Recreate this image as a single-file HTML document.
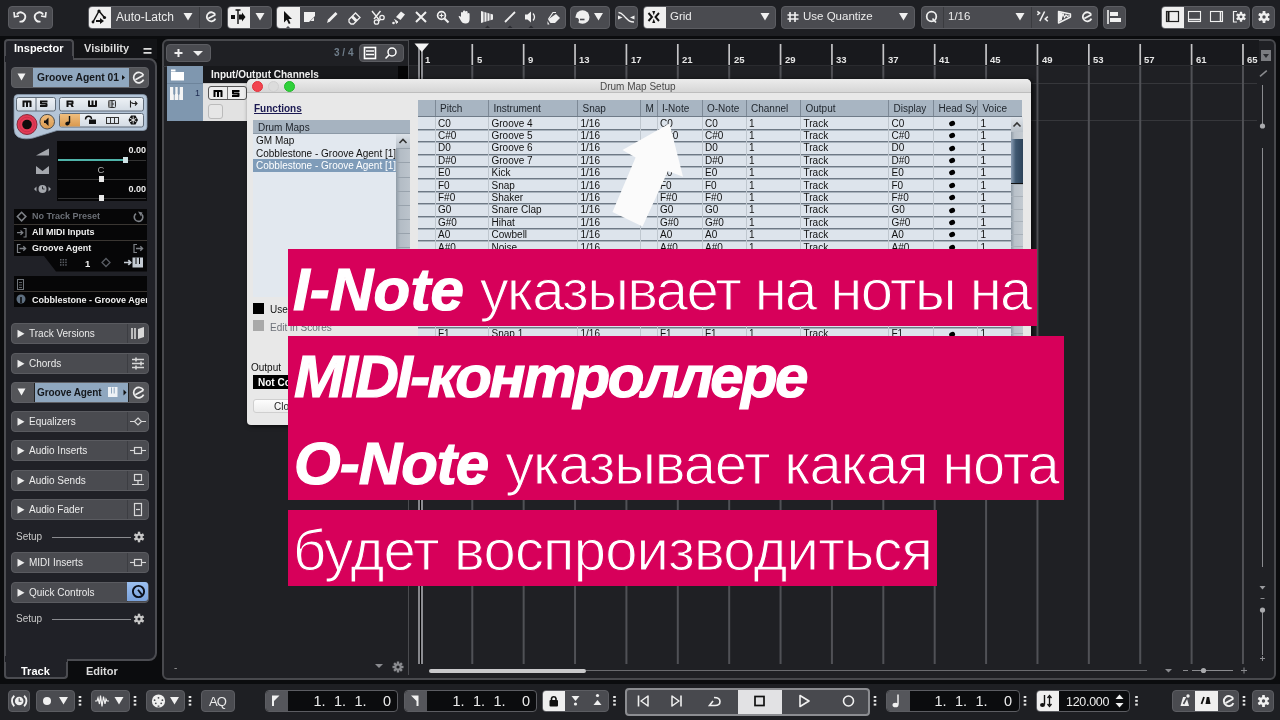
<!DOCTYPE html>
<html><head><meta charset="utf-8">
<style>
*{margin:0;padding:0;box-sizing:border-box}
html,body{width:1280px;height:720px;overflow:hidden;will-change:transform;background:#0b0c0e;font-family:"Liberation Sans",sans-serif;color:#fff}
.a{position:absolute}
.btn{position:absolute;background:#4a4b50;border:1px solid #5c5d62;border-radius:4px}
.wb{position:absolute;background:#efefef}
.dv{position:absolute;top:0;bottom:0;width:1px;background:#35363a}
.tri{position:absolute;width:0;height:0;border-left:5px solid transparent;border-right:5px solid transparent;border-top:8px solid #eee}
.t{position:absolute;white-space:nowrap}
</style></head><body>

<!-- TOP TOOLBAR -->
<div class="a" style="left:0;top:0;width:1280px;height:36px;background:#1e1f23"></div>
<div id="toolbar">
<div class="btn" style="left:8px;top:6px;width:45px;height:23px;overflow:hidden"></div>
<div class="btn" style="left:88px;top:6px;width:134px;height:23px;overflow:hidden"><div class="wb" style="left:0;top:0;width:22px;height:21px"></div><div class="a" style="left:110px;top:0;width:1px;height:21px;background:#3a3b3f"></div></div>
<div class="btn" style="left:227px;top:6px;width:45px;height:23px;overflow:hidden"><div class="wb" style="left:0;top:0;width:22px;height:21px"></div></div>
<div class="btn" style="left:276px;top:6px;width:290px;height:23px;overflow:hidden"><div class="wb" style="left:0;top:0;width:23px;height:21px"></div></div>
<div class="btn" style="left:570px;top:6px;width:40px;height:23px;overflow:hidden"></div>
<div class="btn" style="left:615px;top:6px;width:23px;height:23px;overflow:hidden"></div>
<div class="btn" style="left:643px;top:6px;width:133px;height:23px;overflow:hidden"><div class="wb" style="left:0;top:0;width:22px;height:21px"></div></div>
<div class="btn" style="left:781px;top:6px;width:134px;height:23px;overflow:hidden"></div>
<div class="btn" style="left:921px;top:6px;width:177px;height:23px;overflow:hidden"><div class="a" style="left:21px;top:0;width:1px;height:21px;background:#3a3b3f"></div><div class="a" style="left:109px;top:0;width:1px;height:21px;background:#3a3b3f"></div></div>
<div class="btn" style="left:1103px;top:6px;width:23px;height:23px;overflow:hidden"></div>
<div class="btn" style="left:1161px;top:6px;width:89px;height:23px;overflow:hidden"><div class="wb" style="left:0;top:0;width:22px;height:21px"></div></div>
<div class="btn" style="left:1252px;top:6px;width:23px;height:23px;overflow:hidden"></div>
<div class="t" style="left:116px;top:10px;font-size:12px;color:#ececec">Auto-Latch</div>
<div class="t" style="left:670px;top:10px;font-size:11.5px;color:#ececec">Grid</div>
<div class="t" style="left:803px;top:10px;font-size:11.5px;color:#ececec">Use Quantize</div>
<div class="t" style="left:948px;top:10px;font-size:11.5px;color:#ececec">1/16</div>
<svg class="a" style="left:0;top:0" width="1280" height="36"><path d="M19.5 21.5 A4.6 4.6 0 1 0 16.8 14.5" stroke="#f0f0f0" stroke-width="1.8" fill="none"/><path d="M14 12 L14.5 16.8 L19 16" stroke="#f0f0f0" stroke-width="1.6" fill="none"/><path d="M40.5 21.5 A4.6 4.6 0 1 1 43.2 14.5" stroke="#f0f0f0" stroke-width="1.8" fill="none"/><path d="M46 12 L45.5 16.8 L41 16" stroke="#f0f0f0" stroke-width="1.6" fill="none"/><path d="M93 22 L99 11 L104 17" stroke="#111" stroke-width="1.5" fill="none"/><circle cx="99" cy="11" r="1.6" fill="#111"/><circle cx="104.5" cy="17.5" r="1.6" fill="#111"/><circle cx="93" cy="22" r="1.4" fill="#111"/><path d="M96 20 H100 V18 L104 21 L100 24 V22 H96 Z" fill="#111"/><path d="M183.5 13 L192.5 13 L188 20.5 Z" fill="#f0f0f0"/><path d="M215.28 14.67 A4.5 4.5 0 1 0 215.41 18.59" stroke="#f0f0f0" stroke-width="1.8" fill="none"/><path d="M208.30 18.59 L215.28 14.67" stroke="#f0f0f0" stroke-width="1.8"/><rect x="231" y="15" width="4" height="4" fill="#111"/><path d="M238 10 V24 M235.5 10 H240.5" stroke="#111" stroke-width="1.4"/><path d="M239 14.5 H242 V12.5 L245.5 17 L242 21.5 V19.5 H239 Z" fill="#111"/><path d="M255.5 13 L264.5 13 L260 20.5 Z" fill="#f0f0f0"/><path d="M284 11 L284 22.5 L286.8 19.8 L288.8 24 L290.5 23.2 L288.5 19 L292 19 Z" fill="#111"/><path d="M286 28 L288 26 L290 28 Z" fill="#4a4b50"/><rect x="304" y="12" width="11" height="10" fill="#f0f0f0"/><path d="M309 22 L315 16 V22 Z" fill="#4a4b50"/><path d="M310.5 21 L314 17.5 V21 Z" fill="#f0f0f0"/><path d="M327 23 L328 19.5 L335.5 12 L337.5 14 L330 21.5 Z" fill="#f0f0f0"/><path d="M349 19.5 L355.5 13 L360 17.5 L353.5 24 H351 L349 22 Z" fill="none" stroke="#f0f0f0" stroke-width="1.3"/><path d="M352 16.5 L356.5 21" stroke="#f0f0f0" stroke-width="3"/><path d="M372 11 L380 21 M380.5 11 L374 19" stroke="#f0f0f0" stroke-width="1.4"/><circle cx="382" cy="17.5" r="2.2" fill="none" stroke="#f0f0f0" stroke-width="1.3"/><circle cx="376.5" cy="22" r="2.2" fill="none" stroke="#f0f0f0" stroke-width="1.3"/><path d="M396 17 L401 11.5 L405 14.5 L400.5 20 Z" fill="#f0f0f0"/><path d="M394.5 19.5 L398 22 L396 23.5" fill="#f0f0f0" stroke="#f0f0f0"/><circle cx="393.5" cy="23" r="1.3" fill="#f0f0f0"/><path d="M416 12 L426 22 M426 12 L416 22" stroke="#f0f0f0" stroke-width="2"/><circle cx="441.5" cy="15.5" r="3.9" fill="none" stroke="#f0f0f0" stroke-width="1.7"/><path d="M444.5 18.5 L448.5 22.5" stroke="#f0f0f0" stroke-width="2.2"/><path d="M441.5 13.5 V17.5 M439.5 15.5 H443.5" stroke="#f0f0f0" stroke-width="1.2"/><path d="M461 17 V13 Q461 12 462 12 Q463 12 463 13 V16 V11.5 Q463 10.5 464.2 10.5 Q465.3 10.5 465.3 11.5 V16 V12 Q465.3 11 466.5 11 Q467.6 11 467.6 12 V17 V14 Q467.6 13 468.6 13 Q469.6 13 469.6 14 V19 Q469.6 23.5 465.5 23.5 Q462 23.5 460.5 20 L458.5 16.5 Q459.5 15.5 461 17 Z" fill="#f0f0f0"/><path d="M481 11 L493 14.5 V19.5 L481 23 Z" fill="#f0f0f0"/><path d="M484 11 V23 M487 12 V22 M490 13 V21" stroke="#4a4b50" stroke-width="0.9"/><path d="M485 28 L487.5 25.5 L490 28 Z" fill="#2b2c30"/><path d="M505 22 L515 12" stroke="#f0f0f0" stroke-width="1.8"/><path d="M507.5 28 L510 25.5 L512.5 28 Z" fill="#2b2c30"/><path d="M525 14.5 H527.5 L531 11.5 V22.5 L527.5 19.5 H525 Z" fill="#f0f0f0"/><path d="M533 13.5 Q536 17 533 20.5" stroke="#f0f0f0" stroke-width="1.3" fill="none"/><path d="M528.5 28 L531 25.5 L533.5 28 Z" fill="#2b2c30"/><path d="M548 19.5 L556 14 L560 18 L555 23 H550.5 Z" fill="#f0f0f0"/><path d="M548.5 19 L553 12.5 H556" stroke="#f0f0f0" stroke-width="1.2" fill="none"/><path d="M547.5 21 V24.5 H549.5 Z" fill="#f0f0f0"/><ellipse cx="582.5" cy="17" rx="7" ry="6.8" fill="#f0f0f0"/><circle cx="576.3" cy="20.3" r="2.6" fill="#4a4b50"/><path d="M580 19.5 H584.5" stroke="#4a4b50" stroke-width="1.6"/><path d="M594.0 13 L603.0 13 L598.5 20.5 Z" fill="#f0f0f0"/><path d="M618.5 12.5 C622 12.5 623 15 626 18 C629 21 630 22 634 22" stroke="#f0f0f0" stroke-width="1.5" fill="none"/><path d="M618 15.5 L622.5 17.5 L618 19.5 Z" fill="#f0f0f0"/><path d="M634.5 15.5 L630 17.5 L634.5 19.5 Z" fill="#f0f0f0"/><path d="M648.5 13 L652 17 L648.5 21 M659 13 L655.5 17 L659 21" stroke="#111" stroke-width="1.9" fill="none"/><path d="M652.2 11 L655.3 11 L653.75 15.3 Z M652.2 23 L655.3 23 L653.75 18.7 Z" fill="#111"/><path d="M760.5 13 L769.5 13 L765 20.5 Z" fill="#f0f0f0"/><path d="M790 12 V22 M795 12 V22 M787.5 15 H798.5 M787.5 19 H798.5" stroke="#f0f0f0" stroke-width="1.6"/><path d="M899.0 13 L908.0 13 L903.5 20.5 Z" fill="#f0f0f0"/><circle cx="931.5" cy="16.5" r="4.8" fill="none" stroke="#f0f0f0" stroke-width="1.7"/><path d="M932.5 18.5 L936 22.5" stroke="#f0f0f0" stroke-width="1.7"/><path d="M1015.5 13 L1024.5 13 L1020 20.5 Z" fill="#f0f0f0"/><path d="M1037.3 11.3 L1039.6 13 L1037.3 14.8 M1044.6 11.5 L1039.8 21.2 M1047.8 16.6 L1045.2 18.9 L1047.8 21.3" stroke="#f0f0f0" stroke-width="1.5" fill="none"/><path d="M1058.5 11.5 L1070.5 14 V17 L1058.5 23 Z" fill="none" stroke="#f0f0f0" stroke-width="1.4" stroke-linejoin="round"/><path d="M1059 12 L1062 12.8 L1062 20 L1059 21.5 Z" fill="#f0f0f0"/><path d="M1061.5 18 L1063 13.5 L1064.5 17.5 L1066 15 L1067.5 16.5 L1069.5 15.5" stroke="#f0f0f0" stroke-width="1.2" fill="none"/><path d="M1091.28 14.67 A4.5 4.5 0 1 0 1091.41 18.59" stroke="#f0f0f0" stroke-width="1.8" fill="none"/><path d="M1084.30 18.59 L1091.28 14.67" stroke="#f0f0f0" stroke-width="1.8"/><path d="M1108 10 V24" stroke="#f0f0f0" stroke-width="1.6"/><rect x="1110" y="12" width="8" height="4" fill="#f0f0f0"/><rect x="1110" y="18" width="11" height="4" fill="#f0f0f0"/><rect x="1166.5" y="11.5" width="12" height="10" fill="none" stroke="#222" stroke-width="1.2"/><path d="M1168.5 12 V21" stroke="#111" stroke-width="2"/><rect x="1188.5" y="11.5" width="12" height="10" fill="none" stroke="#f0f0f0" stroke-width="1.1"/><path d="M1189 19.5 H1200" stroke="#f0f0f0" stroke-width="1.5"/><rect x="1210.5" y="11.5" width="12" height="10" fill="none" stroke="#f0f0f0" stroke-width="1.1"/><path d="M1220.5 12 V21" stroke="#f0f0f0" stroke-width="1.5"/><path d="M1237 11.5 H1233.5 V22 H1237" stroke="#f0f0f0" stroke-width="1.2" fill="none"/><g transform="translate(1241,16.8)"><circle r="3.4" fill="#f0f0f0"/><rect x="-1.2" y="-5.0" width="2.4" height="10.0" rx="0.6" fill="#f0f0f0" transform="rotate(0)"/><rect x="-1.2" y="-5.0" width="2.4" height="10.0" rx="0.6" fill="#f0f0f0" transform="rotate(60)"/><rect x="-1.2" y="-5.0" width="2.4" height="10.0" rx="0.6" fill="#f0f0f0" transform="rotate(120)"/><circle r="1.4" fill="#4a4b50"/></g><g transform="translate(1264,17)"><circle r="4.0" fill="#f0f0f0"/><rect x="-1.4" y="-6.0" width="2.8" height="12.0" rx="0.6" fill="#f0f0f0" transform="rotate(0)"/><rect x="-1.4" y="-6.0" width="2.8" height="12.0" rx="0.6" fill="#f0f0f0" transform="rotate(60)"/><rect x="-1.4" y="-6.0" width="2.8" height="12.0" rx="0.6" fill="#f0f0f0" transform="rotate(120)"/><circle r="1.7" fill="#4a4b50"/></g></svg>
</div>

<!-- INSPECTOR -->
<div id="insp"><div class="a" style="left:74px;top:39px;width:83px;height:20px;background:#131417"></div>
<div class="a" style="left:4px;top:39px;width:70px;height:22px;background:#202127;border:2px solid #4b4c51;border-bottom:none;border-radius:4px 4px 0 0"></div>
<div class="a" style="left:4px;top:58px;width:153px;height:603px;background:#202127;border:2px solid #4b4c51;border-radius:0 8px 8px 0"></div>
<div class="a" style="left:5px;top:56px;width:68px;height:6px;background:#202127"></div>
<div class="t" style="left:14px;top:42px;font-size:11px;font-weight:bold">Inspector</div>
<div class="t" style="left:84px;top:42px;font-size:11px;font-weight:bold;color:#dcdcdc">Visibility</div>
<svg class="a" style="left:143px;top:47px" width="10" height="8"><path d="M0.5 1.8 H8.5 M0.5 5.8 H8.5" stroke="#ddd" stroke-width="1.7"/></svg>
<div class="a" style="left:4px;top:660px;width:64px;height:19px;background:#202127;border:2px solid #4b4c51;border-top:none;border-radius:0 0 4px 4px"></div>
<div class="a" style="left:5px;top:656px;width:62px;height:6px;background:#202127"></div>
<div class="t" style="left:21px;top:665px;font-size:11px;font-weight:bold">Track</div>
<div class="t" style="left:86px;top:665px;font-size:11px;font-weight:bold;color:#dcdcdc">Editor</div>
<div class="a" style="left:11px;top:67px;width:138px;height:21px;background:#545559;border:1px solid #5e5f64;border-radius:4px;overflow:hidden"><div class="a" style="left:21px;top:0;width:96px;height:19px;background:#8fa7bf"></div></div>
<svg class="a" style="left:11px;top:67px" width="138" height="21"><path d="M6.5 6.5 L14.5 6.5 L10.5 13.5 Z" fill="#f2f2f2"/><path d="M111 8 L114 10.5 L111 13 Z" fill="#111"/></svg>
<div class="t" style="left:37px;top:72px;font-size:10.3px;font-weight:bold;color:#15181c">Groove Agent 01</div>
<svg class="a" style="left:131px;top:71px" width="16" height="16"><path d="M12.44 4.16 A5.2 5.2 0 1 0 12.60 8.68" stroke="#eee" stroke-width="1.7" fill="none"/><path d="M4.38 8.68 L12.44 4.16" stroke="#eee" stroke-width="1.7"/></svg>
<svg class="a" style="left:0;top:90px" width="160" height="52">
<defs><linearGradient id="bg1" x1="0" y1="0" x2="0" y2="1"><stop offset="0" stop-color="#eef2f6"/><stop offset="1" stop-color="#d3dbe4"/></linearGradient>
<linearGradient id="og" x1="0" y1="0" x2="0" y2="1"><stop offset="0" stop-color="#f0be7e"/><stop offset="1" stop-color="#d9994f"/></linearGradient></defs>
<path d="M18 4.5 H143 Q147 4.5 147 8.5 V37 Q147 40.5 143 40.5 H57 L33 48 Q24 50 18 47 Q14 44.5 14 38 V8.5 Q14 4.5 18 4.5 Z" fill="#b4c5d8" stroke="#8797a8" stroke-width="0.8"/>
<rect x="16.5" y="7.5" width="39" height="13.5" rx="2" fill="url(#bg1)" stroke="#5f6b78" stroke-width="1"/>
<path d="M36 8 V21" stroke="#5f6b78" stroke-width="1"/>
<rect x="59.5" y="7.5" width="84" height="13.5" rx="2" fill="url(#bg1)" stroke="#5f6b78" stroke-width="1"/>
<rect x="59.5" y="23.5" width="84" height="13.5" rx="2" fill="url(#bg1)" stroke="#5f6b78" stroke-width="1"/>
<path d="M60 24 H80 V36.5 H60 Z" fill="url(#og)"/>
<g fill="#111">
<path d="M22.5 10.5 H30.5 Q31.5 10.5 31.5 11.5 V17 H29.5 V12.5 H28 V17 H26 V12.5 H24.5 V17 H22.5 Z"/>
<path d="M40 10.5 H47.5 V12.5 H42 V13 H46.5 Q47.5 13 47.5 14 V16 Q47.5 17 46.5 17 H40 V15 H45.5 V14.5 H41 Q40 14.5 40 13.5 Z"/>
<g transform="translate(-3.5,0)"><path d="M70 10.5 H76 Q77 10.5 77 11.5 V13.5 Q77 14.3 76 14.5 L77.3 17 H75 L74 14.8 H72 V17 H70 Z M72 12.3 V13.2 H75 V12.3 Z"/></g>
<path d="M88 10.5 H90 V15 H91.5 V10.5 H93.5 V15 H95 V10.5 H97 V16 Q97 17 96 17 H89 Q88 17 88 16 Z"/>
</g>
<rect x="108.5" y="10.5" width="7" height="7" rx="1" fill="#cfd6de" stroke="#333" stroke-width="1"/><path d="M112 10.5 V17.5 M112 14 H114" stroke="#333" stroke-width="1.2"/><rect x="108.5" y="10.5" width="2" height="7" fill="#888"/>
<path d="M130.5 10.5 V17.5 M130.5 12.5 Q132 12.5 133 13.5 H137 M135 11.5 L137 13.5 L135 15.5" stroke="#222" stroke-width="1.1" fill="none"/>
<ellipse cx="67.5" cy="33.5" rx="2.3" ry="1.8" fill="#111" transform="rotate(-20 67.5 33.5)"/><path d="M69.5 33 V26" stroke="#111" stroke-width="1.4"/>
<path d="M85.5 29.5 Q85.5 26.3 88.5 26.3 Q91.5 26.3 91.5 29" stroke="#111" stroke-width="1.4" fill="none"/><rect x="89" y="29.5" width="7" height="4.5" fill="#111"/>
<rect x="106.5" y="27.5" width="12" height="6" fill="none" stroke="#333" stroke-width="1"/><path d="M110.5 28 V33 M114.5 28 V33" stroke="#333" stroke-width="1"/>
<path d="M131 25.5 H135.5 L138 30 L135.5 34.5 H131 L128.5 30 Z" fill="#111"/><path d="M133.2 26.5 V33.5 M130 28.2 L136.4 31.8 M130 31.8 L136.4 28.2" stroke="#eee" stroke-width="0.9"/>
<circle cx="27" cy="34.5" r="10" fill="#e23a55" stroke="#7a2331" stroke-width="0.9"/><circle cx="27" cy="34.5" r="7.3" fill="none" stroke="#c42f48" stroke-width="0.8"/><circle cx="27" cy="34.5" r="4.8" fill="#0d0d0d"/>
<circle cx="47.2" cy="31.7" r="7.3" fill="url(#og)" stroke="#4b4b4b" stroke-width="1"/><path d="M44 30.5 H45.5 L48.5 27.5 V36 L45.5 33 H44 Z" fill="#111"/>
</svg>
<div class="a" style="left:57px;top:141px;width:90px;height:60px;background:#060607"></div>
<div class="t" style="left:128.5px;top:145px;font-size:9px;font-weight:bold;color:#eee">0.00</div>
<div class="a" style="left:58px;top:159px;width:68px;height:2px;background:#4fb3a9"></div>
<div class="a" style="left:126px;top:160px;width:20px;height:1px;background:#333"></div>
<div class="a" style="left:123px;top:157px;width:5px;height:6px;background:#cfe3e6"></div>
<div class="t" style="left:97.5px;top:164px;font-size:9.5px;color:#aaa">C</div>
<div class="a" style="left:58px;top:178.5px;width:88px;height:1px;background:#333"></div>
<div class="a" style="left:99px;top:176px;width:5px;height:6px;background:#e8e8e8"></div>
<div class="t" style="left:128.5px;top:184px;font-size:9px;font-weight:bold;color:#eee">0.00</div>
<div class="a" style="left:58px;top:198px;width:88px;height:1px;background:#333"></div>
<div class="a" style="left:99px;top:195px;width:5px;height:6px;background:#e8e8e8"></div>
<svg class="a" style="left:33px;top:144px" width="20" height="55"><path d="M3 11.5 L16 4.5 V11.5 Z" fill="#a4a7ad"/><path d="M3 22 L9.5 27 L16 22 V30 H3 Z" fill="#a4a7ad"/><circle cx="9.5" cy="45" r="4" fill="#a4a7ad"/><path d="M1 45 L3.5 42.5 V47.5 Z M18 45 L15.5 42.5 V47.5 Z" fill="#a4a7ad"/><path d="M9.5 42.5 V45 H11.5" stroke="#202127" stroke-width="0.9" fill="none"/></svg>
<div class="a" style="left:14px;top:209px;width:133px;height:47px;background:#060607"></div>
<div class="a" style="left:14px;top:224px;width:133px;height:1px;background:#3a3632"></div>
<div class="a" style="left:14px;top:240px;width:133px;height:1px;background:#3a3632"></div>
<svg class="a" style="left:14px;top:209px" width="133" height="63"><path d="M0 47 H133 V62.5 H42 L30 47 Z" fill="#060607"/>
<path d="M3.3 7.6 L7.6 3.3 L11.9 7.6 L7.6 11.9 Z" stroke="#7d8187" stroke-width="1.5" fill="none"/>
<path d="M128 5.5 A4.3 4.3 0 1 1 122 4.6" stroke="#7d8187" stroke-width="1.6" fill="none"/><path d="M124 2.5 L128.5 3.5 L127 7.5" fill="#7d8187"/>
<path d="M3 23.7 H8.5 M6.5 21.5 L8.8 23.7 L6.5 25.9" stroke="#7d8187" stroke-width="1.3" fill="none"/><path d="M9.5 19.5 H12 V28 H9.5" stroke="#7d8187" stroke-width="1.2" fill="none"/>
<path d="M6.5 35.5 H3.5 V43.5 H6.5" stroke="#7d8187" stroke-width="1.2" fill="none"/><path d="M5.5 39.5 H11.5 M9.3 37.3 L11.6 39.5 L9.3 41.7" stroke="#7d8187" stroke-width="1.3" fill="none"/>
<path d="M123 35.5 H120 V43.5 H123" stroke="#7d8187" stroke-width="1.2" fill="none"/><path d="M122 39.5 H128.5 M126.3 37.3 L128.6 39.5 L126.3 41.7" stroke="#7d8187" stroke-width="1.3" fill="none"/>
<g fill="#5a5e64"><rect x="46.0" y="50.0" width="1.5" height="1.5"/><rect x="46.0" y="52.6" width="1.5" height="1.5"/><rect x="46.0" y="55.2" width="1.5" height="1.5"/><rect x="48.6" y="50.0" width="1.5" height="1.5"/><rect x="48.6" y="52.6" width="1.5" height="1.5"/><rect x="48.6" y="55.2" width="1.5" height="1.5"/><rect x="51.2" y="50.0" width="1.5" height="1.5"/><rect x="51.2" y="52.6" width="1.5" height="1.5"/><rect x="51.2" y="55.2" width="1.5" height="1.5"/></g>
<path d="M88 53.5 L92 49.5 L96 53.5 L92 57.5 Z" stroke="#595d63" stroke-width="1.3" fill="none"/>
<path d="M110 53.5 H116.5 M114.3 51.2 L116.7 53.5 L114.3 55.8" stroke="#c4cbd3" stroke-width="1.7" fill="none"/>
<rect x="118.5" y="48.5" width="10.5" height="10" fill="#c4cbd3"/><path d="M122 48.5 V55 M125.5 48.5 V55" stroke="#060607" stroke-width="1"/>
</svg>
<div class="t" style="left:32px;top:211px;font-size:9px;font-weight:bold;color:#6b6f76">No Track Preset</div>
<div class="t" style="left:32px;top:227px;font-size:9px;font-weight:bold;color:#f0f0f0">All MIDI Inputs</div>
<div class="t" style="left:32px;top:243px;font-size:9px;font-weight:bold;color:#f0f0f0">Groove Agent</div>
<div class="t" style="left:85px;top:258px;font-size:9.5px;font-weight:bold;color:#f0f0f0">1</div>
<div class="a" style="left:14px;top:276px;width:133px;height:31px;background:#060607"></div>
<div class="a" style="left:14px;top:291px;width:133px;height:1px;background:#3a3632"></div>
<svg class="a" style="left:14px;top:276px" width="20" height="31"><rect x="3.5" y="3.5" width="6" height="10" fill="none" stroke="#6f747a" stroke-width="1"/><path d="M5 6.5 H8 M5 9 H8 M5 11.5 H8" stroke="#6f747a" stroke-width="0.8"/><circle cx="7" cy="23" r="4.5" fill="#5e6f80"/><path d="M7 21 V27" stroke="#060607" stroke-width="1.5"/></svg>
<div class="t" style="left:32px;top:295px;font-size:9px;font-weight:bold;color:#f0f0f0;width:115px;overflow:hidden">Cobblestone - Groove Agent</div>
<div class="a" style="left:11px;top:323px;width:138px;height:21px;background:#4a4b50;border:1px solid #5a5b60;border-radius:4px;overflow:hidden"><div class="a" style="left:115px;top:0;width:1px;height:19px;background:#3c3d42"></div></div>
<svg class="a" style="left:11px;top:323px" width="16" height="21"><path d="M6.5 6.8 L13.5 10.8 L6.5 14.8 Z" fill="#ececec"/></svg>
<div class="t" style="left:29px;top:328px;font-size:10px;color:#ececec">Track Versions</div>
<div class="a" style="left:11px;top:353px;width:138px;height:21px;background:#4a4b50;border:1px solid #5a5b60;border-radius:4px;overflow:hidden"><div class="a" style="left:115px;top:0;width:1px;height:19px;background:#3c3d42"></div></div>
<svg class="a" style="left:11px;top:353px" width="16" height="21"><path d="M6.5 6.8 L13.5 10.8 L6.5 14.8 Z" fill="#ececec"/></svg>
<div class="t" style="left:29px;top:358px;font-size:10px;color:#ececec">Chords</div>
<div class="a" style="left:11px;top:411px;width:138px;height:21px;background:#4a4b50;border:1px solid #5a5b60;border-radius:4px;overflow:hidden"><div class="a" style="left:115px;top:0;width:1px;height:19px;background:#3c3d42"></div></div>
<svg class="a" style="left:11px;top:411px" width="16" height="21"><path d="M6.5 6.8 L13.5 10.8 L6.5 14.8 Z" fill="#ececec"/></svg>
<div class="t" style="left:29px;top:416px;font-size:10px;color:#ececec">Equalizers</div>
<div class="a" style="left:11px;top:440px;width:138px;height:21px;background:#4a4b50;border:1px solid #5a5b60;border-radius:4px;overflow:hidden"><div class="a" style="left:115px;top:0;width:1px;height:19px;background:#3c3d42"></div></div>
<svg class="a" style="left:11px;top:440px" width="16" height="21"><path d="M6.5 6.8 L13.5 10.8 L6.5 14.8 Z" fill="#ececec"/></svg>
<div class="t" style="left:29px;top:445px;font-size:10px;color:#ececec">Audio Inserts</div>
<div class="a" style="left:11px;top:470px;width:138px;height:21px;background:#4a4b50;border:1px solid #5a5b60;border-radius:4px;overflow:hidden"><div class="a" style="left:115px;top:0;width:1px;height:19px;background:#3c3d42"></div></div>
<svg class="a" style="left:11px;top:470px" width="16" height="21"><path d="M6.5 6.8 L13.5 10.8 L6.5 14.8 Z" fill="#ececec"/></svg>
<div class="t" style="left:29px;top:475px;font-size:10px;color:#ececec">Audio Sends</div>
<div class="a" style="left:11px;top:499px;width:138px;height:21px;background:#4a4b50;border:1px solid #5a5b60;border-radius:4px;overflow:hidden"><div class="a" style="left:115px;top:0;width:1px;height:19px;background:#3c3d42"></div></div>
<svg class="a" style="left:11px;top:499px" width="16" height="21"><path d="M6.5 6.8 L13.5 10.8 L6.5 14.8 Z" fill="#ececec"/></svg>
<div class="t" style="left:29px;top:504px;font-size:10px;color:#ececec">Audio Fader</div>
<div class="a" style="left:11px;top:552px;width:138px;height:21px;background:#4a4b50;border:1px solid #5a5b60;border-radius:4px;overflow:hidden"><div class="a" style="left:115px;top:0;width:1px;height:19px;background:#3c3d42"></div></div>
<svg class="a" style="left:11px;top:552px" width="16" height="21"><path d="M6.5 6.8 L13.5 10.8 L6.5 14.8 Z" fill="#ececec"/></svg>
<div class="t" style="left:29px;top:557px;font-size:10px;color:#ececec">MIDI Inserts</div>
<div class="a" style="left:11px;top:582px;width:138px;height:21px;background:#4a4b50;border:1px solid #5a5b60;border-radius:4px;overflow:hidden"><div class="a" style="left:115px;top:0;width:1px;height:19px;background:#3c3d42"></div></div>
<svg class="a" style="left:11px;top:582px" width="16" height="21"><path d="M6.5 6.8 L13.5 10.8 L6.5 14.8 Z" fill="#ececec"/></svg>
<div class="t" style="left:29px;top:587px;font-size:10px;color:#ececec">Quick Controls</div>
<div class="a" style="left:11px;top:382px;width:138px;height:21px;background:#545559;border:1px solid #5e5f64;border-radius:4px;overflow:hidden"><div class="a" style="left:22px;top:0;width:95px;height:19px;background:#8fa7bf;border-left:1px solid #222;border-right:1px solid #222"></div></div>
<svg class="a" style="left:11px;top:382px" width="138" height="21"><path d="M6.5 6.5 L14.5 6.5 L10.5 13.5 Z" fill="#f2f2f2"/><path d="M112.5 7.5 L115.5 10.5 L112.5 13.5 Z" fill="#111"/><rect x="97.5" y="5.5" width="8.5" height="9" fill="#eef2f6" stroke="#eef2f6"/><path d="M100.5 5.5 V11.5 M103.2 5.5 V11.5" stroke="#8fa7bf" stroke-width="1"/></svg>
<div class="t" style="left:37px;top:387px;font-size:10px;font-weight:bold;color:#15181c;letter-spacing:-0.1px">Groove Agent</div>
<svg class="a" style="left:131px;top:386px" width="16" height="16"><path d="M12.44 4.16 A5.2 5.2 0 1 0 12.60 8.68" stroke="#eee" stroke-width="1.7" fill="none"/><path d="M4.38 8.68 L12.44 4.16" stroke="#eee" stroke-width="1.7"/></svg>
<svg class="a" style="left:127px;top:323px" width="22" height="21"><path d="M5 5 V16 M8 5 V16" stroke="#d8d8d8" stroke-width="1.6"/><path d="M11 6 L17 4 V14 L11 16 Z" fill="#d8d8d8"/></svg>
<svg class="a" style="left:127px;top:353px" width="22" height="21"><path d="M5 6.5 H17 M5 10.5 H17 M5 14.5 H17" stroke="#d8d8d8" stroke-width="1.5"/><path d="M9 4.5 V8.5 M14 8.5 V12.5 M9 12.5 V16.5" stroke="#d8d8d8" stroke-width="1.6"/></svg>
<svg class="a" style="left:127px;top:411px" width="22" height="21"><path d="M3 10.5 H7.5 M14.5 10.5 H19" stroke="#d8d8d8" stroke-width="1.1"/><path d="M11 7 L14.5 10.5 L11 14 L7.5 10.5 Z" fill="none" stroke="#d8d8d8" stroke-width="1.2"/></svg>
<svg class="a" style="left:127px;top:440px" width="22" height="21"><path d="M3 10.5 H19" stroke="#d8d8d8" stroke-width="1.1"/><rect x="7.5" y="7.5" width="7" height="6" fill="#4a4b50" stroke="#d8d8d8" stroke-width="1.2"/></svg>
<svg class="a" style="left:127px;top:469px" width="22" height="21"><rect x="7.5" y="5.5" width="7" height="6" fill="none" stroke="#d8d8d8" stroke-width="1.2"/><path d="M11 11.5 V15.5 M5 15.5 H17" stroke="#d8d8d8" stroke-width="1.2"/></svg>
<svg class="a" style="left:127px;top:499px" width="22" height="21"><rect x="7.5" y="4.5" width="7" height="12" fill="none" stroke="#d8d8d8" stroke-width="1.2"/><path d="M9 10.5 H13" stroke="#d8d8d8" stroke-width="1.2"/></svg>
<svg class="a" style="left:127px;top:552px" width="22" height="21"><path d="M3 10.5 H19" stroke="#d8d8d8" stroke-width="1.1"/><rect x="7.5" y="7.5" width="7" height="6" fill="#4a4b50" stroke="#d8d8d8" stroke-width="1.2"/></svg>
<div class="a" style="left:127px;top:582px;width:21px;height:19px;background:linear-gradient(#9cc0f0,#7aa2dc);border-radius:0 3px 3px 0"></div>
<svg class="a" style="left:127px;top:581px" width="22" height="21"><circle cx="11.5" cy="10.5" r="5.6" fill="none" stroke="#0a0f1a" stroke-width="1.9"/><path d="M11 8.8 L14.8 13.6" stroke="#0a0f1a" stroke-width="1.8"/></svg>
<div class="t" style="left:16px;top:530.5px;font-size:10px;color:#c8c8c8">Setup</div>
<div class="a" style="left:52px;top:536.5px;width:79px;height:1px;background:#8a8b8f"></div>
<svg class="a" style="left:132px;top:530.0px" width="14" height="14"><g transform="translate(7,7)"><circle r="3.6" fill="#c8c8c8"/><rect x="-1.2" y="-5.3" width="2.4" height="10.6" fill="#c8c8c8" transform="rotate(0)"/><rect x="-1.2" y="-5.3" width="2.4" height="10.6" fill="#c8c8c8" transform="rotate(60)"/><rect x="-1.2" y="-5.3" width="2.4" height="10.6" fill="#c8c8c8" transform="rotate(120)"/><circle r="1.5" fill="#202127"/></g></svg>
<div class="t" style="left:16px;top:612.5px;font-size:10px;color:#c8c8c8">Setup</div>
<div class="a" style="left:52px;top:618.5px;width:79px;height:1px;background:#8a8b8f"></div>
<svg class="a" style="left:132px;top:612.0px" width="14" height="14"><g transform="translate(7,7)"><circle r="3.6" fill="#c8c8c8"/><rect x="-1.2" y="-5.3" width="2.4" height="10.6" fill="#c8c8c8" transform="rotate(0)"/><rect x="-1.2" y="-5.3" width="2.4" height="10.6" fill="#c8c8c8" transform="rotate(60)"/><rect x="-1.2" y="-5.3" width="2.4" height="10.6" fill="#c8c8c8" transform="rotate(120)"/><circle r="1.5" fill="#202127"/></g></svg>
</div>
<!-- PROJECT WINDOW -->
<div id="proj">
<div class="a" style="left:162px;top:39px;width:1114px;height:641px;background:#1f2024;border:2px solid #48494d;border-radius:6px"></div>
<div class="a" style="left:409px;top:40px;width:850px;height:26px;background:#18191d;border-bottom:1px solid #2a2b2f"></div>
<div class="a" style="left:163px;top:66px;width:246px;height:1px;background:#3a3b3f"></div>
<div class="btn" style="left:166px;top:44px;width:45px;height:18px"></div>
<svg class="a" style="left:166px;top:44px" width="45" height="18"><path d="M12.5 5 V13 M8.5 9 H16.5" stroke="#eee" stroke-width="2"/><path d="M27 7 L37 7 L32 12 Z" fill="#eee"/></svg>
<div class="t" style="left:334px;top:47px;font-size:10px;font-weight:bold;color:#6f7d8a">3 / 4</div>
<div class="btn" style="left:359px;top:44px;width:45px;height:18px"></div>
<svg class="a" style="left:359px;top:44px" width="45" height="18"><rect x="5.5" y="3.5" width="11" height="11" fill="none" stroke="#fff" stroke-width="1.6"/><path d="M7 7 H15 M7 10.5 H15" stroke="#fff" stroke-width="1.4"/><circle cx="33" cy="8" r="4" fill="none" stroke="#fff" stroke-width="1.5"/><path d="M30 11 L26.5 14.5" stroke="#fff" stroke-width="1.6"/></svg>
<div class="a" style="left:167px;top:66px;width:36px;height:17px;background:#7f97af"></div>
<div class="a" style="left:203px;top:66px;width:195px;height:17px;background:#17181b"></div>
<div class="a" style="left:398px;top:66px;width:10px;height:17px;background:#050506"></div>
<svg class="a" style="left:170px;top:68px" width="16" height="14"><rect x="1" y="1.5" width="4.5" height="2" fill="#fff"/><rect x="1" y="4" width="13" height="8.5" fill="#fff"/></svg>
<div class="t" style="left:211px;top:69px;font-size:10px;font-weight:bold;color:#f2f2f2">Input/Output Channels</div>
<div class="a" style="left:167px;top:83px;width:36px;height:38px;background:#7f97af;border-top:1px solid #6d849b"></div>
<div class="a" style="left:203px;top:83px;width:205px;height:38px;background:#e2e2e2;border-top:1px solid #c8c8c8"></div>
<svg class="a" style="left:169px;top:86px" width="16" height="15"><rect x="1" y="1" width="13" height="13" fill="#f4f4f4"/><path d="M5.3 1 V9 M9.7 1 V9" stroke="#7f97af" stroke-width="1.2"/><rect x="4.3" y="1" width="2" height="7" fill="#7f97af"/><rect x="8.7" y="1" width="2" height="7" fill="#7f97af"/><path d="M5.3 8 V14 M9.7 8 V14" stroke="#7f97af" stroke-width="0.8"/></svg>
<div class="t" style="left:195px;top:88px;font-size:9px;color:#1c2a50">1</div>
<div class="a" style="left:208px;top:86px;width:39px;height:14px;background:#ededed;border:1px solid #555;border-radius:3px"></div>
<div class="a" style="left:227px;top:87px;width:1px;height:12px;background:#777"></div>
<svg class="a" style="left:208px;top:86px" width="40" height="15"><g fill="#000"><path d="M5.5 4 H13.5 Q14.5 4 14.5 5 V11 H12.5 V6 H11 V11 H9 V6 H7.5 V11 H5.5 Z"/><path d="M24 4 H31.5 V6 H26 V6.6 H30.5 Q31.5 6.6 31.5 7.6 V10 Q31.5 11 30.5 11 H24 V9 H29.5 V8.5 H25 Q24 8.5 24 7.5 Z"/></g></svg>

<div class="a" style="left:208px;top:104px;width:15px;height:15px;background:#e6e6e6;border:1px solid #bbb;border-radius:3px"></div>
<div class="a" style="left:408px;top:40px;width:1px;height:635px;background:#4a4b4f"></div>
<div class="a" style="left:409px;top:83px;width:848px;height:1px;background:#36373b"></div>
<div class="a" style="left:409px;top:120px;width:848px;height:1px;background:#36373b"></div>
<div class="t" style="left:425px;top:54px;font-size:9.5px;font-weight:bold;color:#e6e6e6">1</div>
<div class="t" style="left:477px;top:54px;font-size:9.5px;font-weight:bold;color:#e6e6e6">5</div>
<div class="t" style="left:528px;top:54px;font-size:9.5px;font-weight:bold;color:#e6e6e6">9</div>
<div class="t" style="left:579px;top:54px;font-size:9.5px;font-weight:bold;color:#e6e6e6">13</div>
<div class="t" style="left:631px;top:54px;font-size:9.5px;font-weight:bold;color:#e6e6e6">17</div>
<div class="t" style="left:682px;top:54px;font-size:9.5px;font-weight:bold;color:#e6e6e6">21</div>
<div class="t" style="left:734px;top:54px;font-size:9.5px;font-weight:bold;color:#e6e6e6">25</div>
<div class="t" style="left:785px;top:54px;font-size:9.5px;font-weight:bold;color:#e6e6e6">29</div>
<div class="t" style="left:836px;top:54px;font-size:9.5px;font-weight:bold;color:#e6e6e6">33</div>
<div class="t" style="left:888px;top:54px;font-size:9.5px;font-weight:bold;color:#e6e6e6">37</div>
<div class="t" style="left:939px;top:54px;font-size:9.5px;font-weight:bold;color:#e6e6e6">41</div>
<div class="t" style="left:990px;top:54px;font-size:9.5px;font-weight:bold;color:#e6e6e6">45</div>
<div class="t" style="left:1042px;top:54px;font-size:9.5px;font-weight:bold;color:#e6e6e6">49</div>
<div class="t" style="left:1093px;top:54px;font-size:9.5px;font-weight:bold;color:#e6e6e6">53</div>
<div class="t" style="left:1144px;top:54px;font-size:9.5px;font-weight:bold;color:#e6e6e6">57</div>
<div class="t" style="left:1196px;top:54px;font-size:9.5px;font-weight:bold;color:#e6e6e6">61</div>
<div class="t" style="left:1247px;top:54px;font-size:9.5px;font-weight:bold;color:#e6e6e6">65</div>
<svg class="a" style="left:0;top:0" width="1280" height="720"><path d="M472.28 44 V65" stroke="#c4c4c6" stroke-width="1.7"/><path d="M472.28 66 V664" stroke="#505156" stroke-width="2"/><path d="M523.66 44 V65" stroke="#c4c4c6" stroke-width="1.7"/><path d="M523.66 66 V664" stroke="#505156" stroke-width="2"/><path d="M575.04 44 V65" stroke="#c4c4c6" stroke-width="1.7"/><path d="M575.04 66 V664" stroke="#505156" stroke-width="2"/><path d="M626.42 44 V65" stroke="#c4c4c6" stroke-width="1.7"/><path d="M626.42 66 V664" stroke="#505156" stroke-width="2"/><path d="M677.80 44 V65" stroke="#c4c4c6" stroke-width="1.7"/><path d="M677.80 66 V664" stroke="#505156" stroke-width="2"/><path d="M729.18 44 V65" stroke="#c4c4c6" stroke-width="1.7"/><path d="M729.18 66 V664" stroke="#505156" stroke-width="2"/><path d="M780.56 44 V65" stroke="#c4c4c6" stroke-width="1.7"/><path d="M780.56 66 V664" stroke="#505156" stroke-width="2"/><path d="M831.94 44 V65" stroke="#c4c4c6" stroke-width="1.7"/><path d="M831.94 66 V664" stroke="#505156" stroke-width="2"/><path d="M883.32 44 V65" stroke="#c4c4c6" stroke-width="1.7"/><path d="M883.32 66 V664" stroke="#505156" stroke-width="2"/><path d="M934.70 44 V65" stroke="#c4c4c6" stroke-width="1.7"/><path d="M934.70 66 V664" stroke="#505156" stroke-width="2"/><path d="M986.08 44 V65" stroke="#c4c4c6" stroke-width="1.7"/><path d="M986.08 66 V664" stroke="#505156" stroke-width="2"/><path d="M1037.46 44 V65" stroke="#c4c4c6" stroke-width="1.7"/><path d="M1037.46 66 V664" stroke="#505156" stroke-width="2"/><path d="M1088.84 44 V65" stroke="#c4c4c6" stroke-width="1.7"/><path d="M1088.84 66 V664" stroke="#505156" stroke-width="2"/><path d="M1140.22 44 V65" stroke="#c4c4c6" stroke-width="1.7"/><path d="M1140.22 66 V664" stroke="#505156" stroke-width="2"/><path d="M1191.60 44 V65" stroke="#c4c4c6" stroke-width="1.7"/><path d="M1191.60 66 V664" stroke="#505156" stroke-width="2"/><path d="M1242.98 44 V65" stroke="#c4c4c6" stroke-width="1.7"/><path d="M1242.98 66 V664" stroke="#505156" stroke-width="2"/></svg>
<div class="a" style="left:418px;top:48px;width:2px;height:616px;background:#85868b"></div>
<div class="a" style="left:420px;top:48px;width:1px;height:616px;background:#050506"></div>
<div class="a" style="left:421px;top:48px;width:2px;height:616px;background:#8d8e93"></div>
<svg class="a" style="left:414px;top:43px" width="16" height="11"><path d="M0.5 0.5 L15 0.5 L7.8 9 Z" fill="#f4f4f4"/></svg>
<div class="a" style="left:1261px;top:50px;width:10px;height:11px;background:#7b7c80"></div>
<svg class="a" style="left:1261px;top:50px" width="10" height="11"><path d="M2 4 L8 4 L5 8 Z" fill="#2a2b2f"/></svg>
<svg class="a" style="left:1255px;top:65px" width="16" height="600"><path d="M5 11.3 L11.8 5.7" stroke="#8a8b8f" stroke-width="1.5"/><path d="M7.5 20 V60" stroke="#8a8b8f" stroke-width="1"/><circle cx="7.5" cy="61" r="2.6" fill="#a9aaad"/><path d="M7.5 83 V502" stroke="#8a8b8f" stroke-width="1"/><path d="M4.5 521 L10.5 521 L7.5 524.5 Z" fill="#9a9b9f"/><path d="M5.5 533.5 H9.5" stroke="#8a8b8f" stroke-width="1"/><path d="M7.5 545 V590" stroke="#8a8b8f" stroke-width="1"/><circle cx="7.5" cy="545" r="2.6" fill="#a9aaad"/><path d="M5 593.5 H10 M7.5 591 V596" stroke="#8a8b8f" stroke-width="1"/></svg>
<div class="a" style="left:429px;top:669px;width:157px;height:4px;background:#c9c9cb;border-radius:2px"></div>
<div class="a" style="left:586px;top:670px;width:561px;height:1px;background:#6a6b6f"></div>
<svg class="a" style="left:1180px;top:664px" width="70" height="12"><path d="M3 6.5 H8" stroke="#8a8b8f" stroke-width="1"/><path d="M12 6.5 H53" stroke="#8a8b8f" stroke-width="1"/><circle cx="23.5" cy="6.5" r="2.6" fill="#a9aaad"/><path d="M61 6.5 H67 M64 3.5 V9.5" stroke="#8a8b8f" stroke-width="1"/></svg>
<svg class="a" style="left:1162px;top:664px" width="14" height="12"><path d="M3 5 L10 5 L6.5 8.5 Z" fill="#8a8b8f"/></svg>
<div class="t" style="left:174px;top:662px;font-size:10px;color:#9a9a9a">-</div>
<svg class="a" style="left:373px;top:660px" width="32" height="14"><path d="M2 4 L10 4 L6 8 Z" fill="#8a8b8f"/><g transform="translate(25,7)" fill="#8a8b8f"><circle r="3.6"/><g><rect x="-1.2" y="-5.5" width="2.4" height="11"/><rect x="-1.2" y="-5.5" width="2.4" height="11" transform="rotate(45)"/><rect x="-1.2" y="-5.5" width="2.4" height="11" transform="rotate(90)"/><rect x="-1.2" y="-5.5" width="2.4" height="11" transform="rotate(135)"/></g><circle r="1.6" fill="#1f2024"/></g></svg>
</div>
<!-- BOTTOM TRANSPORT -->
<div id="transport">
<div class="a" style="left:0;top:684px;width:1280px;height:36px;background:#1e1f23"></div>
<div class="btn" style="left:8px;top:690px;width:22px;height:22px;overflow:hidden"></div>
<div class="btn" style="left:35.5px;top:690px;width:39.0px;height:22px;overflow:hidden"></div>
<div class="btn" style="left:90.5px;top:690px;width:39.0px;height:22px;overflow:hidden"></div>
<div class="btn" style="left:145.5px;top:690px;width:39.0px;height:22px;overflow:hidden"></div>
<div class="btn" style="left:201px;top:690px;width:33.5px;height:22px;overflow:hidden"></div>
<div class="btn" style="left:265px;top:690px;width:133px;height:22px;overflow:hidden;background:#0b0c0e"><div class="a" style="left:0;top:0;width:22px;height:20px;background:#55565b"></div></div>
<div class="btn" style="left:404px;top:690px;width:132.5px;height:22px;overflow:hidden;background:#0b0c0e"><div class="a" style="left:0;top:0;width:22px;height:20px;background:#55565b"></div></div>
<div class="btn" style="left:542px;top:690px;width:67px;height:22px;overflow:hidden"><div class="wb" style="left:-1px;top:0;width:23px;height:20px"></div></div>
<div class="btn" style="left:886px;top:690px;width:134px;height:22px;overflow:hidden;background:#0b0c0e"><div class="a" style="left:0;top:0;width:23px;height:20px;background:#55565b"></div></div>
<div class="btn" style="left:1035.5px;top:690px;width:94.5px;height:22px;overflow:hidden;background:#0b0c0e"><div class="wb" style="left:0;top:0;width:22px;height:20px"></div></div>
<div class="btn" style="left:1172px;top:690px;width:67px;height:22px;overflow:hidden"><div class="wb" style="left:22px;top:0;width:23px;height:20px"></div></div>
<div class="btn" style="left:1252px;top:690px;width:22px;height:22px;overflow:hidden"></div>
<div class="a" style="left:625px;top:687.5px;width:244.5px;height:28px;background:#48494e;border:2px solid #8c8d91;border-radius:4px;overflow:hidden"><div class="a" style="left:110.5px;top:0;width:44px;height:24px;background:#e2e2e4"></div></div>
<svg class="a" style="left:0;top:0" width="1280" height="720"><g fill="#e8e8e8"><rect x="78.7" y="696" width="2.6" height="2"/><rect x="78.7" y="699.8" width="2.6" height="2"/><rect x="78.7" y="703.6" width="2.6" height="2"/></g><g fill="#e8e8e8"><rect x="133.7" y="696" width="2.6" height="2"/><rect x="133.7" y="699.8" width="2.6" height="2"/><rect x="133.7" y="703.6" width="2.6" height="2"/></g><g fill="#e8e8e8"><rect x="188.7" y="696" width="2.6" height="2"/><rect x="188.7" y="699.8" width="2.6" height="2"/><rect x="188.7" y="703.6" width="2.6" height="2"/></g><g fill="#e8e8e8"><rect x="613.2" y="696" width="2.6" height="2"/><rect x="613.2" y="699.8" width="2.6" height="2"/><rect x="613.2" y="703.6" width="2.6" height="2"/></g><g fill="#e8e8e8"><rect x="873.7" y="696" width="2.6" height="2"/><rect x="873.7" y="699.8" width="2.6" height="2"/><rect x="873.7" y="703.6" width="2.6" height="2"/></g><g fill="#e8e8e8"><rect x="1023.7" y="696" width="2.6" height="2"/><rect x="1023.7" y="699.8" width="2.6" height="2"/><rect x="1023.7" y="703.6" width="2.6" height="2"/></g><g fill="#e8e8e8"><rect x="1135.2" y="696" width="2.6" height="2"/><rect x="1135.2" y="699.8" width="2.6" height="2"/><rect x="1135.2" y="703.6" width="2.6" height="2"/></g><g fill="#e8e8e8"><rect x="1242.7" y="696" width="2.6" height="2"/><rect x="1242.7" y="699.8" width="2.6" height="2"/><rect x="1242.7" y="703.6" width="2.6" height="2"/></g><circle cx="19.2" cy="701" r="4.3" fill="#f0f0f0"/><path d="M19.2 698.3 V701.3 H21.5" stroke="#4a4b50" stroke-width="1.1" fill="none"/><path d="M14.3 695.8 A7 7 0 0 0 14.3 706.2 M24.1 695.8 A7 7 0 0 1 24.1 706.2" stroke="#f0f0f0" stroke-width="1.9" fill="none"/><circle cx="47" cy="701" r="4" fill="#f0f0f0"/><path d="M59.0 697 L68.0 697 L63.5 704.5 Z" fill="#f0f0f0"/><path d="M95 701 H97 L98 698 L99.5 704 L100.5 695.5 L102 706.5 L103.5 696.5 L105 704 L106 699 L107 701 H109" stroke="#f0f0f0" stroke-width="1.2" fill="none"/><path d="M114.5 697 L123.5 697 L119 704.5 Z" fill="#f0f0f0"/><circle cx="158.5" cy="701" r="6.6" fill="#f0f0f0"/><g fill="#4a4b50"><circle cx="154.6" cy="700.2" r="0.9"/><circle cx="162.4" cy="700.2" r="0.9"/><circle cx="155.8" cy="703.3" r="0.9"/><circle cx="161.2" cy="703.3" r="0.9"/><circle cx="158.5" cy="697.8" r="0.9"/><rect x="157.6" y="705.5" width="1.8" height="1.3"/></g><path d="M170.0 697 L179.0 697 L174.5 704.5 Z" fill="#f0f0f0"/></svg>
<div class="t" style="left:209px;top:693.5px;font-size:13px;color:#ececec;letter-spacing:-1px">AQ</div>
<div class="t" style="left:313.5px;top:692.5px;font-size:14.5px;color:#ececec">1.</div><div class="t" style="left:334px;top:692.5px;font-size:14.5px;color:#ececec">1.</div><div class="t" style="left:354.5px;top:692.5px;font-size:14.5px;color:#ececec">1.</div><div class="t" style="left:383px;top:692.5px;font-size:14.5px;color:#ececec">0</div>
<div class="t" style="left:452.5px;top:692.5px;font-size:14.5px;color:#ececec">1.</div><div class="t" style="left:473px;top:692.5px;font-size:14.5px;color:#ececec">1.</div><div class="t" style="left:493.5px;top:692.5px;font-size:14.5px;color:#ececec">1.</div><div class="t" style="left:522px;top:692.5px;font-size:14.5px;color:#ececec">0</div>
<div class="t" style="left:934.5px;top:692.5px;font-size:14.5px;color:#ececec">1.</div><div class="t" style="left:955px;top:692.5px;font-size:14.5px;color:#ececec">1.</div><div class="t" style="left:975.5px;top:692.5px;font-size:14.5px;color:#ececec">1.</div><div class="t" style="left:1004px;top:692.5px;font-size:14.5px;color:#ececec">0</div>
<div class="t" style="left:1066px;top:694.5px;font-size:12.5px;color:#ececec;letter-spacing:-0.3px">120.000</div>
<svg class="a" style="left:0;top:0" width="1280" height="720"><path d="M272 695.5 H279.5 L274 701 V706 H272 Z" fill="#f0f0f0"/><path d="M411 695.5 H418.5 V706 H416.5 V701 Z" fill="#f0f0f0"/><rect x="549.5" y="700" width="8.5" height="6.5" rx="1" fill="#111"/><path d="M551.5 700.5 V698.5 A2.3 2.3 0 0 1 556 698.5 V700.5" stroke="#111" stroke-width="1.6" fill="none"/><path d="M571.5 696 H579.5 L575.5 701 Z" fill="#f0f0f0"/><circle cx="575.5" cy="704" r="1.6" fill="#f0f0f0"/><circle cx="597.5" cy="695.5" r="1.6" fill="#f0f0f0"/><path d="M593.5 705 H601.5 L597.5 700 Z" fill="#f0f0f0"/><path d="M638.5 695.5 V706.5" stroke="#f0f0f0" stroke-width="1.6"/><path d="M648 696 L641 701 L648 706 Z" stroke="#f0f0f0" stroke-width="1.5" fill="none" stroke-linejoin="round"/><path d="M681 695.5 V706.5" stroke="#f0f0f0" stroke-width="1.6"/><path d="M672 696 L679 701 L672 706 Z" stroke="#f0f0f0" stroke-width="1.5" fill="none" stroke-linejoin="round"/><path d="M714 697.5 C718 697.5 720 699 720 701.5 C720 704 718 705.5 715 705.5 H709.5 L713 701" stroke="#f0f0f0" stroke-width="1.6" fill="none"/><rect x="755" y="696.5" width="9" height="9" fill="none" stroke="#111" stroke-width="1.7"/><path d="M800 695.5 L809 701 L800 706.5 Z" stroke="#f0f0f0" stroke-width="1.6" fill="none" stroke-linejoin="round"/><circle cx="848.5" cy="701" r="5" stroke="#f0f0f0" stroke-width="1.6" fill="none"/><ellipse cx="895.5" cy="705" rx="3" ry="2.3" fill="#f0f0f0"/><path d="M898 704.5 V694.5" stroke="#f0f0f0" stroke-width="1.5"/><ellipse cx="1042.5" cy="705" rx="2.5" ry="2" fill="#111"/><path d="M1044.5 704.5 V695" stroke="#111" stroke-width="1.4"/><path d="M1049.5 697 V705 M1047.5 698 L1049.5 695.5 L1051.5 698 M1047.5 704 L1049.5 706.5 L1051.5 704" stroke="#111" stroke-width="1.3" fill="none"/><path d="M1115.5 699 L1119.5 694.5 L1123.5 699 Z M1115.5 703 L1119.5 707.5 L1123.5 703 Z" fill="#f0f0f0"/><path d="M1180.5 706 L1183 697 H1186.5 L1189 706 Z" fill="#f0f0f0"/><path d="M1183.5 704 L1187.5 696.5" stroke="#4a4b50" stroke-width="1.6"/><circle cx="1188" cy="696" r="1.7" fill="#f0f0f0"/><path d="M1201.5 704 L1204 697" stroke="#111" stroke-width="1.8"/><path d="M1205.5 704 L1206.8 697 H1209.2 L1210.5 704 Z" fill="#111"/><path d="M1233.25 698.75 A5 5 0 1 0 1233.40 703.10" stroke="#f0f0f0" stroke-width="1.9" fill="none"/><path d="M1225.50 703.10 L1233.25 698.75" stroke="#f0f0f0" stroke-width="1.9"/><g transform="translate(1263.5,701)"><circle r="4" fill="#f0f0f0"/><rect x="-1.4" y="-6" width="2.8" height="12" rx="0.6" fill="#f0f0f0" transform="rotate(0)"/><rect x="-1.4" y="-6" width="2.8" height="12" rx="0.6" fill="#f0f0f0" transform="rotate(60)"/><rect x="-1.4" y="-6" width="2.8" height="12" rx="0.6" fill="#f0f0f0" transform="rotate(120)"/><circle r="1.7" fill="#4a4b50"/></g></svg>
</div>

<!-- DIALOG -->
<div id="dlg">
<div class="a" style="left:247px;top:79px;width:784px;height:346px;background:#e8e8e8;border-radius:5px 5px 4px 4px;overflow:hidden;box-shadow:2px 1px 5px rgba(0,0,0,0.75)">
<div class="a" style="left:0;top:0;width:784px;height:14px;background:linear-gradient(#ececec,#d6d6d6);border-bottom:1px solid #bdbdbd"></div>
<div class="a" style="left:5px;top:2px;width:11px;height:11px;border-radius:50%;background:#f2444f;border:1px solid #e0323c"></div>
<div class="a" style="left:21px;top:2px;width:11px;height:11px;border-radius:50%;background:#dcdcdc;border:1px solid #d0d0d0"></div>
<div class="a" style="left:37px;top:2px;width:11px;height:11px;border-radius:50%;background:#2fd13a;border:1px solid #22b82c"></div>
<div class="t" style="left:353px;top:2px;font-size:10px;color:#4a4a4a">Drum Map Setup</div>
</div>
<div class="t" style="left:254px;top:102.5px;font-size:10px;font-weight:bold;color:#1c1a52;text-decoration:underline">Functions</div>
<div class="a" style="left:253px;top:120px;width:157px;height:14px;background:#a6b3c0;border-bottom:1px solid #8c99a6"></div>
<div class="t" style="left:258px;top:122px;font-size:10px;color:#20252c">Drum Maps</div>
<div class="a" style="left:253px;top:134px;width:143px;height:163px;background:#e2e8ef"></div>
<div class="a" style="left:396px;top:134px;width:14px;height:163px;background:linear-gradient(90deg,#8f9ba6 0,#b3bcc5 30%,#bcc4cc 100%)"></div><div class="a" style="left:396px;top:148px;width:14px;height:1px;background:#98a2ac"></div><div class="a" style="left:396px;top:162px;width:14px;height:1px;background:#98a2ac"></div><div class="a" style="left:396px;top:177px;width:14px;height:1px;background:#98a2ac"></div><div class="a" style="left:396px;top:191px;width:14px;height:1px;background:#98a2ac"></div><div class="a" style="left:396px;top:205px;width:14px;height:1px;background:#98a2ac"></div><div class="a" style="left:396px;top:219px;width:14px;height:1px;background:#98a2ac"></div><div class="a" style="left:396px;top:233px;width:14px;height:1px;background:#98a2ac"></div><div class="a" style="left:396px;top:247px;width:14px;height:1px;background:#98a2ac"></div><div class="a" style="left:396px;top:262px;width:14px;height:1px;background:#98a2ac"></div><div class="a" style="left:396px;top:276px;width:14px;height:1px;background:#98a2ac"></div><div class="a" style="left:396px;top:290px;width:14px;height:1px;background:#98a2ac"></div>
<div class="a" style="left:396px;top:134px;width:14px;height:14px;background:linear-gradient(#dde3e9,#b7c0c9)"></div>
<svg class="a" style="left:396px;top:134px" width="14" height="14"><path d="M3.5 9 L7 5.5 L10.5 9" stroke="#333" stroke-width="1.6" fill="none"/></svg>










<div class="a" style="left:253px;top:159px;width:143px;height:13px;background:#7f9cb9"></div>
<div class="t" style="left:256px;top:135px;font-size:10px;color:#111">GM Map</div>
<div class="t" style="left:256px;top:148px;font-size:10px;color:#111">Cobblestone - Groove Agent [1]</div>
<div class="t" style="left:256px;top:160px;font-size:10px;color:#fff">Cobblestone - Groove Agent [1]</div>
<div class="a" style="left:253px;top:303px;width:11px;height:11px;background:#000"></div>
<div class="t" style="left:270px;top:304px;font-size:10px;color:#111">Use</div>
<div class="a" style="left:253px;top:320px;width:11px;height:11px;background:#a9a9a9"></div>
<div class="t" style="left:270px;top:322px;font-size:10px;color:#6c7078">Edit in Scores</div>
<div class="t" style="left:251px;top:362px;font-size:10px;color:#111">Output</div>
<div class="a" style="left:253px;top:375px;width:100px;height:14px;background:#000"></div>
<div class="t" style="left:258px;top:377px;font-size:10px;font-weight:bold;color:#fff">Not Connected</div>
<div class="a" style="left:253px;top:399px;width:100px;height:14px;background:linear-gradient(#fdfdfd,#ececec);border:1px solid #cfcfcf;border-radius:3px"></div>
<div class="t" style="left:274px;top:401px;font-size:10px;color:#222">Close</div>
<div class="a" style="left:418px;top:100px;width:604px;height:17px;background:#a8b5c2;border-bottom:1px solid #6f7b88"></div>
<div class="a" style="left:434.5px;top:100px;width:1px;height:16px;background:#7d8996"></div>
<div class="a" style="left:488px;top:100px;width:1px;height:16px;background:#7d8996"></div>
<div class="a" style="left:577px;top:100px;width:1px;height:16px;background:#7d8996"></div>
<div class="a" style="left:640px;top:100px;width:1px;height:16px;background:#7d8996"></div>
<div class="a" style="left:656.5px;top:100px;width:1px;height:16px;background:#7d8996"></div>
<div class="a" style="left:701.5px;top:100px;width:1px;height:16px;background:#7d8996"></div>
<div class="a" style="left:745.5px;top:100px;width:1px;height:16px;background:#7d8996"></div>
<div class="a" style="left:800px;top:100px;width:1px;height:16px;background:#7d8996"></div>
<div class="a" style="left:888px;top:100px;width:1px;height:16px;background:#7d8996"></div>
<div class="a" style="left:933px;top:100px;width:1px;height:16px;background:#7d8996"></div>
<div class="a" style="left:977px;top:100px;width:1px;height:16px;background:#7d8996"></div>
<div class="t" style="left:440.0px;top:103px;font-size:10px;color:#1e242b">Pitch</div>
<div class="t" style="left:493.5px;top:103px;font-size:10px;color:#1e242b">Instrument</div>
<div class="t" style="left:582.5px;top:103px;font-size:10px;color:#1e242b">Snap</div>
<div class="t" style="left:645.5px;top:103px;font-size:10px;color:#1e242b">M</div>
<div class="t" style="left:662.0px;top:103px;font-size:10px;color:#1e242b">I-Note</div>
<div class="t" style="left:707.0px;top:103px;font-size:10px;color:#1e242b">O-Note</div>
<div class="t" style="left:751.0px;top:103px;font-size:10px;color:#1e242b">Channel</div>
<div class="t" style="left:805.5px;top:103px;font-size:10px;color:#1e242b">Output</div>
<div class="t" style="left:893.5px;top:103px;font-size:10px;color:#1e242b">Display</div>
<div class="t" style="left:938.5px;top:103px;font-size:10px;color:#1e242b">Head Sy</div>
<div class="t" style="left:982.5px;top:103px;font-size:10px;color:#1e242b">Voice</div>
<div class="a" style="left:418px;top:117px;width:592.5px;height:240px;background:#dde4ec"></div>
<div class="t" style="left:438px;top:118px;font-size:10px;color:#111">C0</div>
<div class="t" style="left:491.5px;top:118px;font-size:10px;color:#111">Groove 4</div>
<div class="t" style="left:580.5px;top:118px;font-size:10px;color:#111">1/16</div>
<div class="t" style="left:660px;top:118px;font-size:10px;color:#111">C0</div>
<div class="t" style="left:705px;top:118px;font-size:10px;color:#111">C0</div>
<div class="t" style="left:749px;top:118px;font-size:10px;color:#111">1</div>
<div class="t" style="left:803.5px;top:118px;font-size:10px;color:#111">Track</div>
<div class="t" style="left:891.5px;top:118px;font-size:10px;color:#111">C0</div>
<div class="a" style="left:948.5px;top:120.8px;width:6px;height:4.5px;border-radius:50%;background:#000;transform:rotate(-25deg)"></div>
<div class="t" style="left:980.5px;top:118px;font-size:10px;color:#111">1</div>
<div class="a" style="left:418px;top:129px;width:592.5px;height:1px;background:#6e7985"></div><div class="a" style="left:418px;top:130px;width:592.5px;height:1px;background:#aab4be"></div>
<div class="t" style="left:438px;top:130px;font-size:10px;color:#111">C#0</div>
<div class="t" style="left:491.5px;top:130px;font-size:10px;color:#111">Groove 5</div>
<div class="t" style="left:580.5px;top:130px;font-size:10px;color:#111">1/16</div>
<div class="t" style="left:660px;top:130px;font-size:10px;color:#111">C#0</div>
<div class="t" style="left:705px;top:130px;font-size:10px;color:#111">C#0</div>
<div class="t" style="left:749px;top:130px;font-size:10px;color:#111">1</div>
<div class="t" style="left:803.5px;top:130px;font-size:10px;color:#111">Track</div>
<div class="t" style="left:891.5px;top:130px;font-size:10px;color:#111">C#0</div>
<div class="a" style="left:948.5px;top:133.2px;width:6px;height:4.5px;border-radius:50%;background:#000;transform:rotate(-25deg)"></div>
<div class="t" style="left:980.5px;top:130px;font-size:10px;color:#111">1</div>
<div class="a" style="left:418px;top:141px;width:592.5px;height:1px;background:#6e7985"></div><div class="a" style="left:418px;top:142px;width:592.5px;height:1px;background:#aab4be"></div>
<div class="t" style="left:438px;top:142px;font-size:10px;color:#111">D0</div>
<div class="t" style="left:491.5px;top:142px;font-size:10px;color:#111">Groove 6</div>
<div class="t" style="left:580.5px;top:142px;font-size:10px;color:#111">1/16</div>
<div class="t" style="left:660px;top:142px;font-size:10px;color:#111">D0</div>
<div class="t" style="left:705px;top:142px;font-size:10px;color:#111">D0</div>
<div class="t" style="left:749px;top:142px;font-size:10px;color:#111">1</div>
<div class="t" style="left:803.5px;top:142px;font-size:10px;color:#111">Track</div>
<div class="t" style="left:891.5px;top:142px;font-size:10px;color:#111">D0</div>
<div class="a" style="left:948.5px;top:145.6px;width:6px;height:4.5px;border-radius:50%;background:#000;transform:rotate(-25deg)"></div>
<div class="t" style="left:980.5px;top:142px;font-size:10px;color:#111">1</div>
<div class="a" style="left:418px;top:154px;width:592.5px;height:1px;background:#6e7985"></div><div class="a" style="left:418px;top:155px;width:592.5px;height:1px;background:#aab4be"></div>
<div class="t" style="left:438px;top:155px;font-size:10px;color:#111">D#0</div>
<div class="t" style="left:491.5px;top:155px;font-size:10px;color:#111">Groove 7</div>
<div class="t" style="left:580.5px;top:155px;font-size:10px;color:#111">1/16</div>
<div class="t" style="left:660px;top:155px;font-size:10px;color:#111">D#0</div>
<div class="t" style="left:705px;top:155px;font-size:10px;color:#111">D#0</div>
<div class="t" style="left:749px;top:155px;font-size:10px;color:#111">1</div>
<div class="t" style="left:803.5px;top:155px;font-size:10px;color:#111">Track</div>
<div class="t" style="left:891.5px;top:155px;font-size:10px;color:#111">D#0</div>
<div class="a" style="left:948.5px;top:158.0px;width:6px;height:4.5px;border-radius:50%;background:#000;transform:rotate(-25deg)"></div>
<div class="t" style="left:980.5px;top:155px;font-size:10px;color:#111">1</div>
<div class="a" style="left:418px;top:166px;width:592.5px;height:1px;background:#6e7985"></div><div class="a" style="left:418px;top:167px;width:592.5px;height:1px;background:#aab4be"></div>
<div class="t" style="left:438px;top:167px;font-size:10px;color:#111">E0</div>
<div class="t" style="left:491.5px;top:167px;font-size:10px;color:#111">Kick</div>
<div class="t" style="left:580.5px;top:167px;font-size:10px;color:#111">1/16</div>
<div class="t" style="left:660px;top:167px;font-size:10px;color:#111">E0</div>
<div class="t" style="left:705px;top:167px;font-size:10px;color:#111">E0</div>
<div class="t" style="left:749px;top:167px;font-size:10px;color:#111">1</div>
<div class="t" style="left:803.5px;top:167px;font-size:10px;color:#111">Track</div>
<div class="t" style="left:891.5px;top:167px;font-size:10px;color:#111">E0</div>
<div class="a" style="left:948.5px;top:170.4px;width:6px;height:4.5px;border-radius:50%;background:#000;transform:rotate(-25deg)"></div>
<div class="t" style="left:980.5px;top:167px;font-size:10px;color:#111">1</div>
<div class="a" style="left:418px;top:178px;width:592.5px;height:1px;background:#6e7985"></div><div class="a" style="left:418px;top:179px;width:592.5px;height:1px;background:#aab4be"></div>
<div class="t" style="left:438px;top:180px;font-size:10px;color:#111">F0</div>
<div class="t" style="left:491.5px;top:180px;font-size:10px;color:#111">Snap</div>
<div class="t" style="left:580.5px;top:180px;font-size:10px;color:#111">1/16</div>
<div class="t" style="left:660px;top:180px;font-size:10px;color:#111">F0</div>
<div class="t" style="left:705px;top:180px;font-size:10px;color:#111">F0</div>
<div class="t" style="left:749px;top:180px;font-size:10px;color:#111">1</div>
<div class="t" style="left:803.5px;top:180px;font-size:10px;color:#111">Track</div>
<div class="t" style="left:891.5px;top:180px;font-size:10px;color:#111">F0</div>
<div class="a" style="left:948.5px;top:182.8px;width:6px;height:4.5px;border-radius:50%;background:#000;transform:rotate(-25deg)"></div>
<div class="t" style="left:980.5px;top:180px;font-size:10px;color:#111">1</div>
<div class="a" style="left:418px;top:191px;width:592.5px;height:1px;background:#6e7985"></div><div class="a" style="left:418px;top:192px;width:592.5px;height:1px;background:#aab4be"></div>
<div class="t" style="left:438px;top:192px;font-size:10px;color:#111">F#0</div>
<div class="t" style="left:491.5px;top:192px;font-size:10px;color:#111">Shaker</div>
<div class="t" style="left:580.5px;top:192px;font-size:10px;color:#111">1/16</div>
<div class="t" style="left:660px;top:192px;font-size:10px;color:#111">F#0</div>
<div class="t" style="left:705px;top:192px;font-size:10px;color:#111">F#0</div>
<div class="t" style="left:749px;top:192px;font-size:10px;color:#111">1</div>
<div class="t" style="left:803.5px;top:192px;font-size:10px;color:#111">Track</div>
<div class="t" style="left:891.5px;top:192px;font-size:10px;color:#111">F#0</div>
<div class="a" style="left:948.5px;top:195.2px;width:6px;height:4.5px;border-radius:50%;background:#000;transform:rotate(-25deg)"></div>
<div class="t" style="left:980.5px;top:192px;font-size:10px;color:#111">1</div>
<div class="a" style="left:418px;top:203px;width:592.5px;height:1px;background:#6e7985"></div><div class="a" style="left:418px;top:204px;width:592.5px;height:1px;background:#aab4be"></div>
<div class="t" style="left:438px;top:204px;font-size:10px;color:#111">G0</div>
<div class="t" style="left:491.5px;top:204px;font-size:10px;color:#111">Snare Clap</div>
<div class="t" style="left:580.5px;top:204px;font-size:10px;color:#111">1/16</div>
<div class="t" style="left:660px;top:204px;font-size:10px;color:#111">G0</div>
<div class="t" style="left:705px;top:204px;font-size:10px;color:#111">G0</div>
<div class="t" style="left:749px;top:204px;font-size:10px;color:#111">1</div>
<div class="t" style="left:803.5px;top:204px;font-size:10px;color:#111">Track</div>
<div class="t" style="left:891.5px;top:204px;font-size:10px;color:#111">G0</div>
<div class="a" style="left:948.5px;top:207.6px;width:6px;height:4.5px;border-radius:50%;background:#000;transform:rotate(-25deg)"></div>
<div class="t" style="left:980.5px;top:204px;font-size:10px;color:#111">1</div>
<div class="a" style="left:418px;top:216px;width:592.5px;height:1px;background:#6e7985"></div><div class="a" style="left:418px;top:217px;width:592.5px;height:1px;background:#aab4be"></div>
<div class="t" style="left:438px;top:217px;font-size:10px;color:#111">G#0</div>
<div class="t" style="left:491.5px;top:217px;font-size:10px;color:#111">Hihat</div>
<div class="t" style="left:580.5px;top:217px;font-size:10px;color:#111">1/16</div>
<div class="t" style="left:660px;top:217px;font-size:10px;color:#111">G#0</div>
<div class="t" style="left:705px;top:217px;font-size:10px;color:#111">G#0</div>
<div class="t" style="left:749px;top:217px;font-size:10px;color:#111">1</div>
<div class="t" style="left:803.5px;top:217px;font-size:10px;color:#111">Track</div>
<div class="t" style="left:891.5px;top:217px;font-size:10px;color:#111">G#0</div>
<div class="a" style="left:948.5px;top:220.0px;width:6px;height:4.5px;border-radius:50%;background:#000;transform:rotate(-25deg)"></div>
<div class="t" style="left:980.5px;top:217px;font-size:10px;color:#111">1</div>
<div class="a" style="left:418px;top:228px;width:592.5px;height:1px;background:#6e7985"></div><div class="a" style="left:418px;top:229px;width:592.5px;height:1px;background:#aab4be"></div>
<div class="t" style="left:438px;top:229px;font-size:10px;color:#111">A0</div>
<div class="t" style="left:491.5px;top:229px;font-size:10px;color:#111">Cowbell</div>
<div class="t" style="left:580.5px;top:229px;font-size:10px;color:#111">1/16</div>
<div class="t" style="left:660px;top:229px;font-size:10px;color:#111">A0</div>
<div class="t" style="left:705px;top:229px;font-size:10px;color:#111">A0</div>
<div class="t" style="left:749px;top:229px;font-size:10px;color:#111">1</div>
<div class="t" style="left:803.5px;top:229px;font-size:10px;color:#111">Track</div>
<div class="t" style="left:891.5px;top:229px;font-size:10px;color:#111">A0</div>
<div class="a" style="left:948.5px;top:232.4px;width:6px;height:4.5px;border-radius:50%;background:#000;transform:rotate(-25deg)"></div>
<div class="t" style="left:980.5px;top:229px;font-size:10px;color:#111">1</div>
<div class="a" style="left:418px;top:240px;width:592.5px;height:1px;background:#6e7985"></div><div class="a" style="left:418px;top:241px;width:592.5px;height:1px;background:#aab4be"></div>
<div class="t" style="left:438px;top:242px;font-size:10px;color:#111">A#0</div>
<div class="t" style="left:491.5px;top:242px;font-size:10px;color:#111">Noise</div>
<div class="t" style="left:580.5px;top:242px;font-size:10px;color:#111">1/16</div>
<div class="t" style="left:660px;top:242px;font-size:10px;color:#111">A#0</div>
<div class="t" style="left:705px;top:242px;font-size:10px;color:#111">A#0</div>
<div class="t" style="left:749px;top:242px;font-size:10px;color:#111">1</div>
<div class="t" style="left:803.5px;top:242px;font-size:10px;color:#111">Track</div>
<div class="t" style="left:891.5px;top:242px;font-size:10px;color:#111">A#0</div>
<div class="a" style="left:948.5px;top:244.8px;width:6px;height:4.5px;border-radius:50%;background:#000;transform:rotate(-25deg)"></div>
<div class="t" style="left:980.5px;top:242px;font-size:10px;color:#111">1</div>
<div class="a" style="left:418px;top:253px;width:592.5px;height:1px;background:#6e7985"></div><div class="a" style="left:418px;top:254px;width:592.5px;height:1px;background:#aab4be"></div>
<div class="t" style="left:438px;top:254px;font-size:10px;color:#111">B0</div>
<div class="t" style="left:491.5px;top:254px;font-size:10px;color:#111">Groove 8</div>
<div class="t" style="left:580.5px;top:254px;font-size:10px;color:#111">1/16</div>
<div class="t" style="left:660px;top:254px;font-size:10px;color:#111">B0</div>
<div class="t" style="left:705px;top:254px;font-size:10px;color:#111">B0</div>
<div class="t" style="left:749px;top:254px;font-size:10px;color:#111">1</div>
<div class="t" style="left:803.5px;top:254px;font-size:10px;color:#111">Track</div>
<div class="t" style="left:891.5px;top:254px;font-size:10px;color:#111">B0</div>
<div class="a" style="left:948.5px;top:257.2px;width:6px;height:4.5px;border-radius:50%;background:#000;transform:rotate(-25deg)"></div>
<div class="t" style="left:980.5px;top:254px;font-size:10px;color:#111">1</div>
<div class="a" style="left:418px;top:265px;width:592.5px;height:1px;background:#6e7985"></div><div class="a" style="left:418px;top:266px;width:592.5px;height:1px;background:#aab4be"></div>
<div class="t" style="left:438px;top:266px;font-size:10px;color:#111">C1</div>
<div class="t" style="left:491.5px;top:266px;font-size:10px;color:#111">Groove 9</div>
<div class="t" style="left:580.5px;top:266px;font-size:10px;color:#111">1/16</div>
<div class="t" style="left:660px;top:266px;font-size:10px;color:#111">C1</div>
<div class="t" style="left:705px;top:266px;font-size:10px;color:#111">C1</div>
<div class="t" style="left:749px;top:266px;font-size:10px;color:#111">1</div>
<div class="t" style="left:803.5px;top:266px;font-size:10px;color:#111">Track</div>
<div class="t" style="left:891.5px;top:266px;font-size:10px;color:#111">C1</div>
<div class="a" style="left:948.5px;top:269.6px;width:6px;height:4.5px;border-radius:50%;background:#000;transform:rotate(-25deg)"></div>
<div class="t" style="left:980.5px;top:266px;font-size:10px;color:#111">1</div>
<div class="a" style="left:418px;top:278px;width:592.5px;height:1px;background:#6e7985"></div><div class="a" style="left:418px;top:279px;width:592.5px;height:1px;background:#aab4be"></div>
<div class="t" style="left:438px;top:279px;font-size:10px;color:#111">C#1</div>
<div class="t" style="left:491.5px;top:279px;font-size:10px;color:#111">Kick 2</div>
<div class="t" style="left:580.5px;top:279px;font-size:10px;color:#111">1/16</div>
<div class="t" style="left:660px;top:279px;font-size:10px;color:#111">C#1</div>
<div class="t" style="left:705px;top:279px;font-size:10px;color:#111">C#1</div>
<div class="t" style="left:749px;top:279px;font-size:10px;color:#111">1</div>
<div class="t" style="left:803.5px;top:279px;font-size:10px;color:#111">Track</div>
<div class="t" style="left:891.5px;top:279px;font-size:10px;color:#111">C#1</div>
<div class="a" style="left:948.5px;top:282.0px;width:6px;height:4.5px;border-radius:50%;background:#000;transform:rotate(-25deg)"></div>
<div class="t" style="left:980.5px;top:279px;font-size:10px;color:#111">1</div>
<div class="a" style="left:418px;top:290px;width:592.5px;height:1px;background:#6e7985"></div><div class="a" style="left:418px;top:291px;width:592.5px;height:1px;background:#aab4be"></div>
<div class="t" style="left:438px;top:291px;font-size:10px;color:#111">D1</div>
<div class="t" style="left:491.5px;top:291px;font-size:10px;color:#111">Snare 1</div>
<div class="t" style="left:580.5px;top:291px;font-size:10px;color:#111">1/16</div>
<div class="t" style="left:660px;top:291px;font-size:10px;color:#111">D1</div>
<div class="t" style="left:705px;top:291px;font-size:10px;color:#111">D1</div>
<div class="t" style="left:749px;top:291px;font-size:10px;color:#111">1</div>
<div class="t" style="left:803.5px;top:291px;font-size:10px;color:#111">Track</div>
<div class="t" style="left:891.5px;top:291px;font-size:10px;color:#111">D1</div>
<div class="a" style="left:948.5px;top:294.4px;width:6px;height:4.5px;border-radius:50%;background:#000;transform:rotate(-25deg)"></div>
<div class="t" style="left:980.5px;top:291px;font-size:10px;color:#111">1</div>
<div class="a" style="left:418px;top:302px;width:592.5px;height:1px;background:#6e7985"></div><div class="a" style="left:418px;top:303px;width:592.5px;height:1px;background:#aab4be"></div>
<div class="t" style="left:438px;top:304px;font-size:10px;color:#111">D#1</div>
<div class="t" style="left:491.5px;top:304px;font-size:10px;color:#111">Groove 10</div>
<div class="t" style="left:580.5px;top:304px;font-size:10px;color:#111">1/16</div>
<div class="t" style="left:660px;top:304px;font-size:10px;color:#111">D#1</div>
<div class="t" style="left:705px;top:304px;font-size:10px;color:#111">D#1</div>
<div class="t" style="left:749px;top:304px;font-size:10px;color:#111">1</div>
<div class="t" style="left:803.5px;top:304px;font-size:10px;color:#111">Track</div>
<div class="t" style="left:891.5px;top:304px;font-size:10px;color:#111">D#1</div>
<div class="a" style="left:948.5px;top:306.8px;width:6px;height:4.5px;border-radius:50%;background:#000;transform:rotate(-25deg)"></div>
<div class="t" style="left:980.5px;top:304px;font-size:10px;color:#111">1</div>
<div class="a" style="left:418px;top:315px;width:592.5px;height:1px;background:#6e7985"></div><div class="a" style="left:418px;top:316px;width:592.5px;height:1px;background:#aab4be"></div>
<div class="t" style="left:438px;top:316px;font-size:10px;color:#111">E1</div>
<div class="t" style="left:491.5px;top:316px;font-size:10px;color:#111">Snare 2</div>
<div class="t" style="left:580.5px;top:316px;font-size:10px;color:#111">1/16</div>
<div class="t" style="left:660px;top:316px;font-size:10px;color:#111">E1</div>
<div class="t" style="left:705px;top:316px;font-size:10px;color:#111">E1</div>
<div class="t" style="left:749px;top:316px;font-size:10px;color:#111">1</div>
<div class="t" style="left:803.5px;top:316px;font-size:10px;color:#111">Track</div>
<div class="t" style="left:891.5px;top:316px;font-size:10px;color:#111">E1</div>
<div class="a" style="left:948.5px;top:319.2px;width:6px;height:4.5px;border-radius:50%;background:#000;transform:rotate(-25deg)"></div>
<div class="t" style="left:980.5px;top:316px;font-size:10px;color:#111">1</div>
<div class="a" style="left:418px;top:327px;width:592.5px;height:1px;background:#6e7985"></div><div class="a" style="left:418px;top:328px;width:592.5px;height:1px;background:#aab4be"></div>
<div class="t" style="left:438px;top:328px;font-size:10px;color:#111">F1</div>
<div class="t" style="left:491.5px;top:328px;font-size:10px;color:#111">Snap 1</div>
<div class="t" style="left:580.5px;top:328px;font-size:10px;color:#111">1/16</div>
<div class="t" style="left:660px;top:328px;font-size:10px;color:#111">F1</div>
<div class="t" style="left:705px;top:328px;font-size:10px;color:#111">F1</div>
<div class="t" style="left:749px;top:328px;font-size:10px;color:#111">1</div>
<div class="t" style="left:803.5px;top:328px;font-size:10px;color:#111">Track</div>
<div class="t" style="left:891.5px;top:328px;font-size:10px;color:#111">F1</div>
<div class="a" style="left:948.5px;top:331.6px;width:6px;height:4.5px;border-radius:50%;background:#000;transform:rotate(-25deg)"></div>
<div class="t" style="left:980.5px;top:328px;font-size:10px;color:#111">1</div>
<div class="a" style="left:418px;top:340px;width:592.5px;height:1px;background:#6e7985"></div><div class="a" style="left:418px;top:341px;width:592.5px;height:1px;background:#aab4be"></div>
<div class="t" style="left:438px;top:341px;font-size:10px;color:#111">F#1</div>
<div class="t" style="left:491.5px;top:341px;font-size:10px;color:#111">Hihat 2</div>
<div class="t" style="left:580.5px;top:341px;font-size:10px;color:#111">1/16</div>
<div class="t" style="left:660px;top:341px;font-size:10px;color:#111">F#1</div>
<div class="t" style="left:705px;top:341px;font-size:10px;color:#111">F#1</div>
<div class="t" style="left:749px;top:341px;font-size:10px;color:#111">1</div>
<div class="t" style="left:803.5px;top:341px;font-size:10px;color:#111">Track</div>
<div class="t" style="left:891.5px;top:341px;font-size:10px;color:#111">F#1</div>
<div class="a" style="left:948.5px;top:344.0px;width:6px;height:4.5px;border-radius:50%;background:#000;transform:rotate(-25deg)"></div>
<div class="t" style="left:980.5px;top:341px;font-size:10px;color:#111">1</div>
<div class="a" style="left:434.5px;top:117px;width:1px;height:240px;background:#bfc7cf"></div>
<div class="a" style="left:488px;top:117px;width:1px;height:240px;background:#bfc7cf"></div>
<div class="a" style="left:577px;top:117px;width:1px;height:240px;background:#bfc7cf"></div>
<div class="a" style="left:640px;top:117px;width:1px;height:240px;background:#bfc7cf"></div>
<div class="a" style="left:656.5px;top:117px;width:1px;height:240px;background:#bfc7cf"></div>
<div class="a" style="left:701.5px;top:117px;width:1px;height:240px;background:#bfc7cf"></div>
<div class="a" style="left:745.5px;top:117px;width:1px;height:240px;background:#bfc7cf"></div>
<div class="a" style="left:800px;top:117px;width:1px;height:240px;background:#bfc7cf"></div>
<div class="a" style="left:888px;top:117px;width:1px;height:240px;background:#bfc7cf"></div>
<div class="a" style="left:933px;top:117px;width:1px;height:240px;background:#bfc7cf"></div>
<div class="a" style="left:977px;top:117px;width:1px;height:240px;background:#bfc7cf"></div>
<div class="a" style="left:1010.5px;top:117px;width:12px;height:240px;background:linear-gradient(90deg,#8f9ba6 0,#b9c1c9 30%,#c3cad1 100%)"></div>
<div class="a" style="left:1010.5px;top:184.0px;width:12px;height:1px;background:#a9b1b9"></div>
<div class="a" style="left:1010.5px;top:196.4px;width:12px;height:1px;background:#a9b1b9"></div>
<div class="a" style="left:1010.5px;top:208.8px;width:12px;height:1px;background:#a9b1b9"></div>
<div class="a" style="left:1010.5px;top:221.2px;width:12px;height:1px;background:#a9b1b9"></div>
<div class="a" style="left:1010.5px;top:233.6px;width:12px;height:1px;background:#a9b1b9"></div>
<div class="a" style="left:1010.5px;top:246.0px;width:12px;height:1px;background:#a9b1b9"></div>
<div class="a" style="left:1010.5px;top:258.4px;width:12px;height:1px;background:#a9b1b9"></div>
<div class="a" style="left:1010.5px;top:270.8px;width:12px;height:1px;background:#a9b1b9"></div>
<div class="a" style="left:1010.5px;top:283.2px;width:12px;height:1px;background:#a9b1b9"></div>
<div class="a" style="left:1010.5px;top:295.6px;width:12px;height:1px;background:#a9b1b9"></div>
<div class="a" style="left:1010.5px;top:308.0px;width:12px;height:1px;background:#a9b1b9"></div>
<div class="a" style="left:1010.5px;top:320.4px;width:12px;height:1px;background:#a9b1b9"></div>
<div class="a" style="left:1010.5px;top:332.8px;width:12px;height:1px;background:#a9b1b9"></div>
<div class="a" style="left:1010.5px;top:345.2px;width:12px;height:1px;background:#a9b1b9"></div>
<div class="a" style="left:1010.5px;top:357.6px;width:12px;height:1px;background:#a9b1b9"></div>
<div class="a" style="left:1010.5px;top:370.0px;width:12px;height:1px;background:#a9b1b9"></div>
<div class="a" style="left:1010.5px;top:117px;width:12px;height:15px;background:linear-gradient(#dfe4ea,#b9c1c9)"></div>
<svg class="a" style="left:1010.5px;top:117px" width="12" height="15"><path d="M2.5 9.5 L6 6 L9.5 9.5" stroke="#333" stroke-width="1.6" fill="none"/></svg>
<div class="a" style="left:1010.5px;top:139px;width:12px;height:45px;background:linear-gradient(90deg,#8a9db3,#3f5870 40%,#2d4258);border-bottom:1px solid #111"></div>
</div>
<!-- ARROW -->
<svg class="a" style="left:0;top:0" width="1280" height="720"><polygon points="669.5,123.5 683,176.7 668,171 642.5,226.5 612.5,212 635.6,157.5 622.5,150" fill="#fbfbfb"/></svg>
<!-- OVERLAY -->
<div id="ov">
  <div class="a" style="left:288px;top:249px;width:749px;height:77px;background:#d7005a"></div>
  <div class="a" style="left:288px;top:336px;width:776px;height:164px;background:#d7005a"></div>
  <div class="a" style="left:288px;top:510px;width:649px;height:76px;background:#d7005a"></div>
  <div class="t" id="L1" style="left:293px;top:254.5px;font-size:58px;line-height:70px"><b><i style="font-size:60px;-webkit-text-stroke:1.2px #fff;letter-spacing:0.2px;margin-right:1px">I-Note</i></b><span style="letter-spacing:-1.6px;-webkit-text-stroke:1.1px #d7005a"> указывает на ноты на</span></div>
  <div class="t" id="L2" style="left:294px;top:341.5px;font-size:60px;line-height:70px;letter-spacing:-2.63px"><b><i style="-webkit-text-stroke:1.2px #fff">MIDI-контроллере</i></b></div>
  <div class="t" id="L3" style="left:294px;top:428.5px;font-size:58px;line-height:70px"><b><i style="font-size:60px;letter-spacing:-0.95px;-webkit-text-stroke:1.2px #fff;margin-right:2px">O-Note</i></b><span style="letter-spacing:-1.2px;-webkit-text-stroke:1.1px #d7005a"> указывает какая нота</span></div>
  <div class="t" id="L4" style="left:293px;top:515px;font-size:58px;line-height:70px;letter-spacing:-0.8px;-webkit-text-stroke:1.1px #d7005a">будет воспроизводиться</div>
</div>
</body></html>
